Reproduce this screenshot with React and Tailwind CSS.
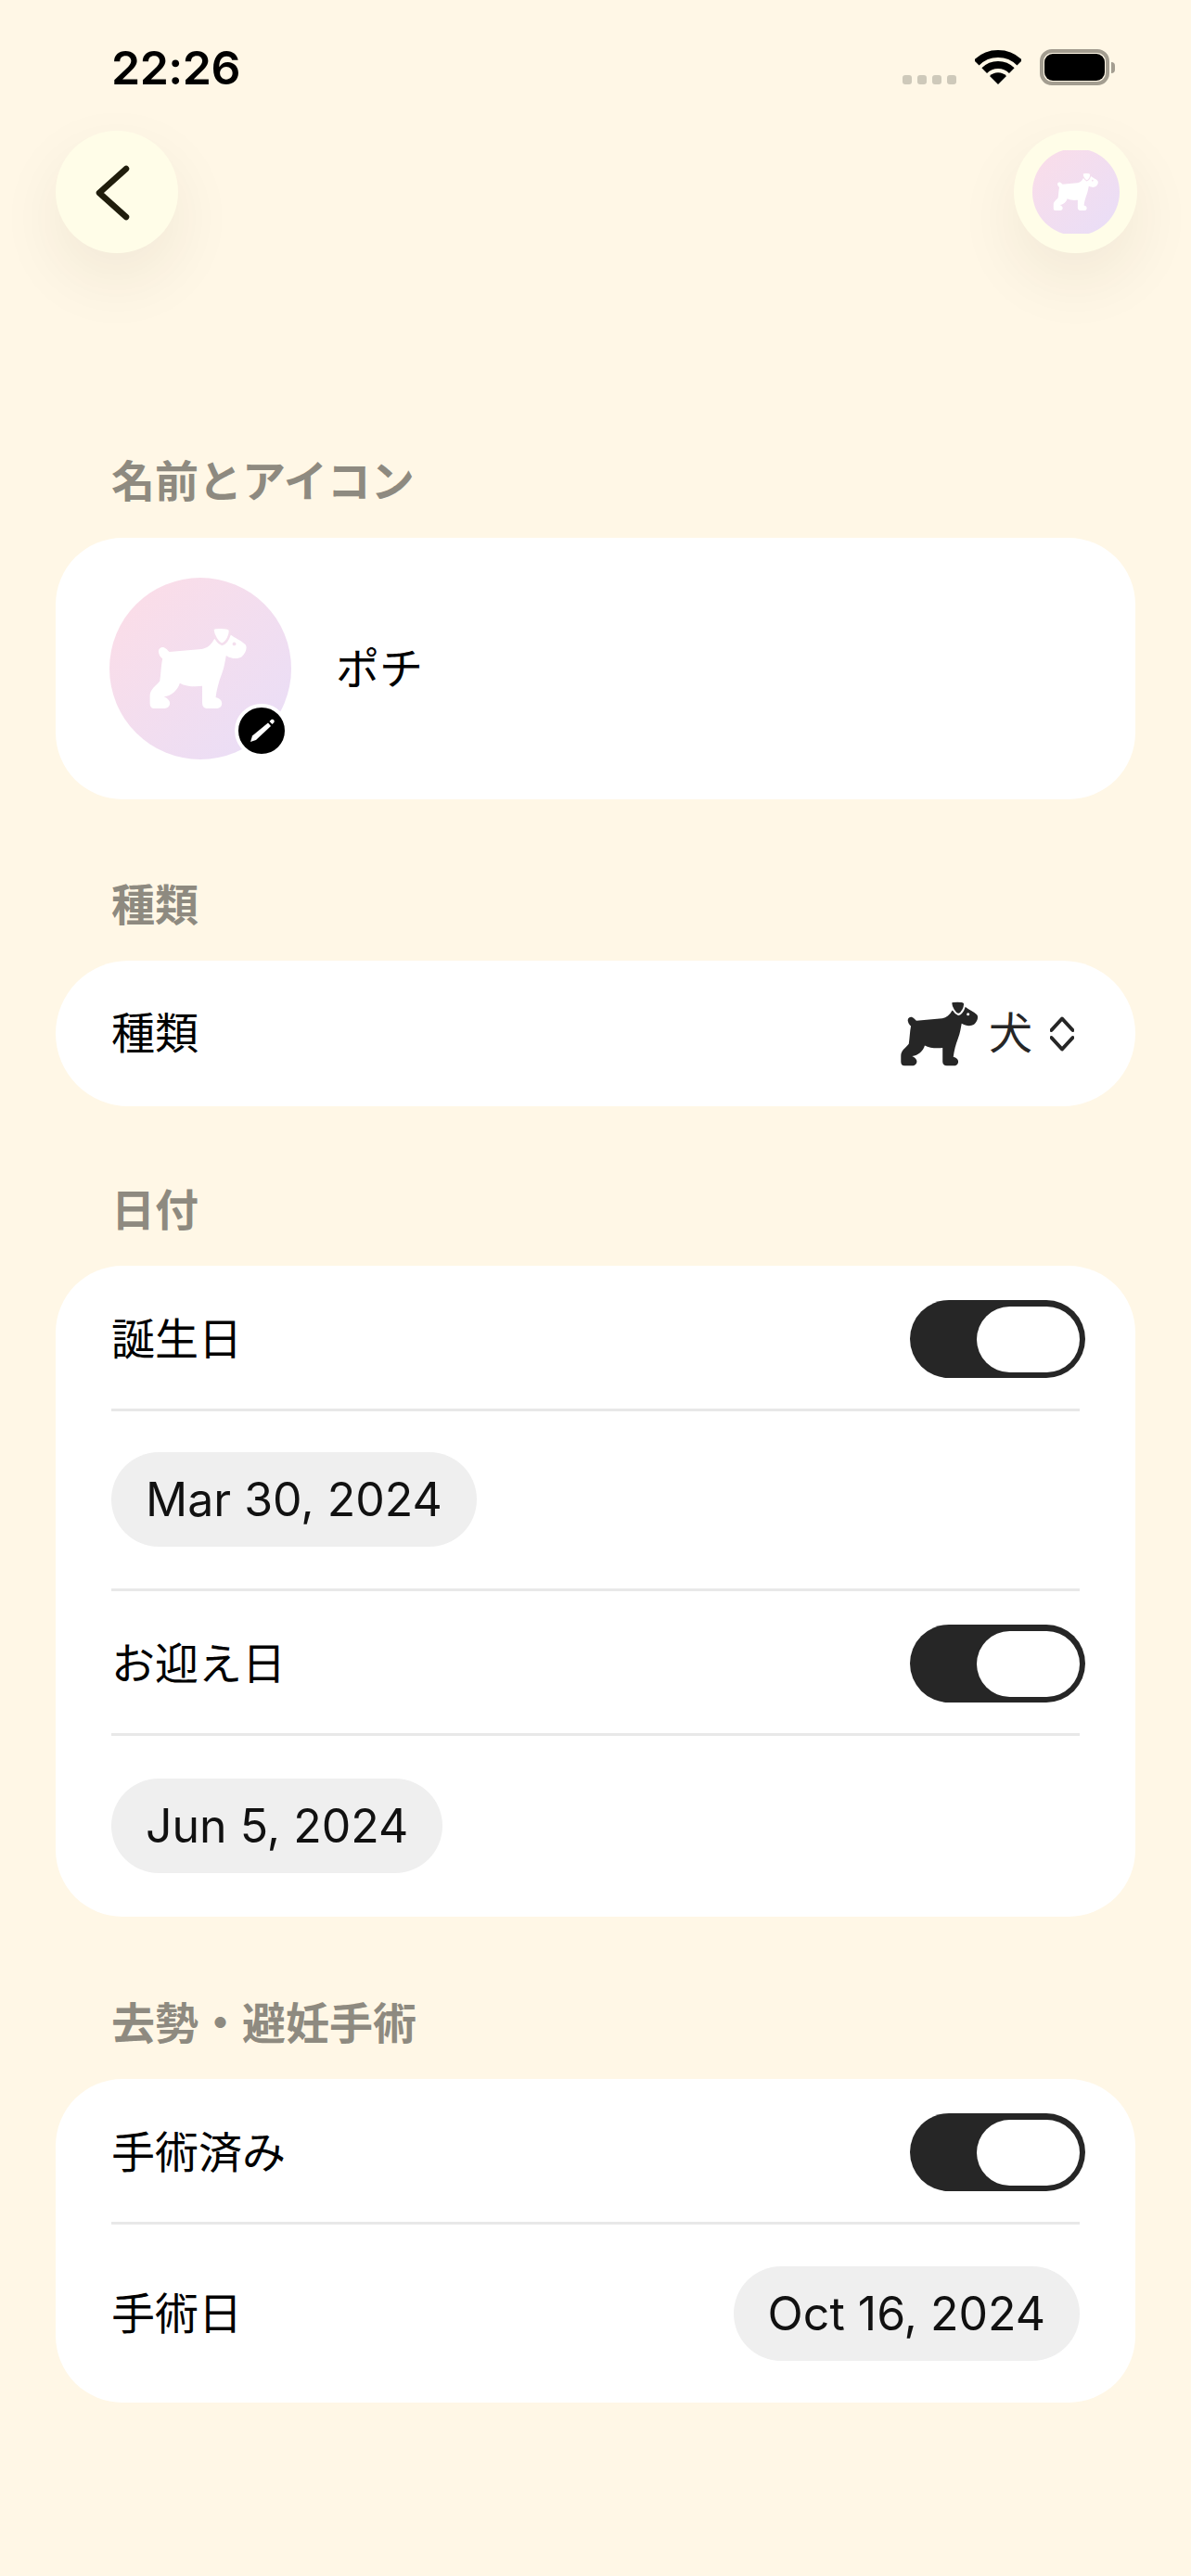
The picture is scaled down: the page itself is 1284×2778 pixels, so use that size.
function Dog({ color = '#fff', gap = '#f4dfee', className = '' }) {
  return (
    <svg viewBox="300 285 335 277" className={className}>
      <path
        fill={color}
        d="M335 372 C330 358 342 350 352 353 C360 356 364 362 370 368 L478 358 C495 356 510 345 520 325 L575 310 C590 322 612 330 624 343 C632 352 626 372 612 384 C600 392 578 392 560 380 C556 400 554 420 545 442 C535 468 528 495 525 520 C540 524 548 532 545 545 C542 554 535 557 525 557 L498 557 C486 557 480 550 480 538 L480 482 C455 484 425 484 405 472 C398 495 378 514 352 517 C372 526 376 540 368 550 C364 555 358 557 350 557 L320 557 C310 557 305 551 305 540 L305 515 C305 492 325 482 338 465 C342 440 342 415 347 390 C340 385 337 380 335 372 Z"
      />
      <path fill={color} stroke={gap} strokeWidth="8" d="M515 293 C518 284 565 284 572 293 C576 310 562 338 546 342 C532 338 516 312 515 293 Z" />
      <circle cx="587" cy="341" r="6" fill={gap} />
    </svg>
  );
}

function Toggle() {
  return (
    <div className="flex h-[84px] w-[189px] items-center justify-end rounded-full bg-[#262626] p-[6px]">
      <div className="h-[71px] w-[111px] rounded-full bg-white" />
    </div>
  );
}

function Label({ children, className = '' }) {
  return <div className={`h-[60px] pl-[120px] text-[47px] leading-[60px] font-bold text-[#8e8a80] ${className}`}>{children}</div>;
}

function Pill({ children }) {
  return <div className="flex h-[102px] items-center rounded-full bg-[#efefef] px-[37px] text-[50px] leading-none text-[#111]">{children}</div>;
}

function Sep() {
  return <div className="h-[3px] bg-[#e8e8e8]" />;
}

function ToggleRow({ label, top = 'pt-[37px]' }) {
  return (
    <div className={`flex items-center justify-between ${top} pb-[33px]`}>
      <span className="text-[47px] leading-[84px] text-black">{label}</span>
      <div className="-mr-[6px]">
        <Toggle />
      </div>
    </div>
  );
}

export default function App() {
  return (
    <div className="min-h-[2778px] w-[1284px] bg-[#fff7e6] font-['Inter','Noto_Sans_CJK_JP',sans-serif]">
      <div className="flex h-[141px] items-start justify-between pr-[82px] pl-[120px] pt-[43px]">
        <span className="text-[50px] leading-[60px] font-semibold tracking-[-0.5px] text-black">22:26</span>
        <div className="relative flex items-start">
          <div className="mt-[38px] flex gap-[6px]">
            <div className="h-[10px] w-[10px] rounded-[3px] bg-[#cec9ba]" />
            <div className="h-[10px] w-[10px] rounded-[3px] bg-[#cec9ba]" />
            <div className="h-[10px] w-[10px] rounded-[3px] bg-[#cec9ba]" />
            <div className="h-[10px] w-[10px] rounded-[3px] bg-[#cec9ba]" />
          </div>
          <svg viewBox="0 0 50 37" className="mt-[11px] ml-[20px] h-[37px] w-[50px]">
            <path d="M1.7 13.7 A33 33 0 0 1 48.3 13.7" fill="none" stroke="#000" strokeWidth="8" />
            <path d="M10.2 22.2 A21 21 0 0 1 39.8 22.2" fill="none" stroke="#000" strokeWidth="8" />
            <path d="M16 28 A12.7 12.7 0 0 1 34 28 L25 37 Z" fill="#000" />
          </svg>
          <div className="mt-[10px] ml-[20px] flex h-[39px] w-[75px] items-center justify-center rounded-[13px] border-[4px] border-[#a39d90] p-[1px]">
            <div className="h-full w-full rounded-[9px] bg-black" />
          </div>
          <div className="mt-[24px] ml-[2px] h-[12px] w-[4px] rounded-r-full bg-[#a39d90]" />
        </div>
      </div>

      <div className="flex items-start justify-between pr-[58px] pl-[60px]">
        <div className="flex h-[132px] w-[132px] items-center justify-center rounded-full bg-[#fffde8] shadow-[0_28px_70px_rgba(60,40,0,0.07)]">
          <svg viewBox="0 0 132 132" className="h-[132px] w-[132px]">
            <path d="M76 41 L47 67 L76 93" fill="none" stroke="#201d0c" strokeWidth="6.5" strokeLinecap="round" strokeLinejoin="round" />
          </svg>
        </div>
        <div className="flex h-[132px] w-[133px] items-center justify-center rounded-full bg-[#fffde8] shadow-[0_28px_70px_rgba(60,40,0,0.07)]">
          <div className="flex h-[90px] w-[94px] items-center justify-center overflow-hidden">
            <div className="flex h-[94px] w-[94px] shrink-0 items-center justify-center rounded-full bg-gradient-to-br from-[#fbdde8] to-[#e8def8]">
              <Dog className="h-[42px] w-[50px]" />
            </div>
          </div>
        </div>
      </div>

      <Label className="mt-[216px]">名前とアイコン</Label>
      <div className="mx-[60px] mt-[31px] flex h-[282px] items-center rounded-[72px] bg-white pl-[58px]">
        <div className="relative flex h-[196px] w-[196px] items-center justify-center rounded-full bg-gradient-to-br from-[#fddde6] to-[#e8def8]">
          <Dog className="h-[90px] w-[108px] -translate-x-[2px]" />
          <div className="absolute top-[136px] left-[135px] flex h-[58px] w-[58px] items-center justify-center rounded-full border-[4px] border-white bg-black">
            <svg viewBox="-25 -25 50 50" className="h-[50px] w-[50px]">
              <path d="M-12 12 L-10 5.5 L7 -8.5 L10 -5 L-6 10 Z" fill="#fff" />
              <path d="M8.5 -10 L10.5 -12 C12.5 -13 14.5 -11 13.5 -9 L11.5 -7 Z" fill="#fff" />
            </svg>
          </div>
        </div>
        <span className="ml-[48px] text-[47px] text-black">ポチ</span>
      </div>

      <Label className="mt-[84px]">種類</Label>
      <div className="mx-[60px] mt-[30px] flex h-[157px] items-center justify-between rounded-full bg-white pr-[66px] pl-[60px]">
        <span className="text-[47px] text-black">種類</span>
        <div className="flex items-center">
          <Dog color="#262626" gap="#ffffff" className="h-[72px] w-[86px]" />
          <span className="ml-[10px] text-[47px] text-[#262626]">犬</span>
          <svg viewBox="0 0 26 38" className="ml-[19px] h-[38px] w-[26px]">
            <path d="M1.5 15 L13 2.5 L24.5 15 M1.5 23 L13 35.5 L24.5 23" fill="none" stroke="#262626" strokeWidth="4" strokeLinecap="round" strokeLinejoin="round" />
          </svg>
        </div>
      </div>

      <Label className="mt-[82px]">日付</Label>
      <div className="mx-[60px] mt-[30px] flex h-[702px] flex-col rounded-[72px] bg-white px-[60px]">
        <ToggleRow label="誕生日" />
        <Sep />
        <div className="flex pt-[44px] pb-[45px]">
          <Pill>Mar 30, 2024</Pill>
        </div>
        <Sep />
        <ToggleRow label="お迎え日" top="pt-[36px]" />
        <Sep />
        <div className="flex pt-[46px] pb-[46px]">
          <Pill>Jun 5, 2024</Pill>
        </div>
      </div>

      <Label className="mt-[85px]">去勢・避妊手術</Label>
      <div className="mx-[60px] mt-[30px] flex h-[349px] flex-col rounded-[72px] bg-white px-[60px]">
        <ToggleRow label="手術済み" />
        <Sep />
        <div className="flex items-center justify-between pt-[45px]">
          <span className="text-[47px] text-black">手術日</span>
          <Pill>Oct 16, 2024</Pill>
        </div>
      </div>
    </div>
  );
}
